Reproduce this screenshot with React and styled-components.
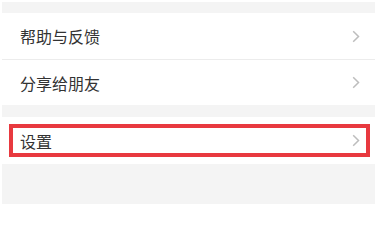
import React from "react";
import styled, { createGlobalStyle } from "styled-components";

const Global = createGlobalStyle`
  html, body { margin: 0; padding: 0; background: #ffffff; }
  body { font-family: "Noto Sans CJK SC", "Noto Sans", sans-serif; }
`;

const Page = styled.div`
  padding: 2px 0 0 2px;
  width: 379px;
  height: 204px;
  box-sizing: border-box;
  overflow: hidden;
`;

const Screen = styled.div`
  width: 373px;
  height: 202px;
  background: #f4f4f4;
  display: flex;
  flex-direction: column;
`;

const Gap = styled.div`
  height: ${(p) => p.$h}px;
  flex-shrink: 0;
`;

const Group = styled.div`
  background: #ffffff;
  display: flex;
  flex-direction: column;
`;

const Row = styled.div`
  position: relative;
  height: ${(p) => p.$h || 46}px;
  display: flex;
  align-items: center;
  justify-content: space-between;
  padding: 0 15px 0 18px;
  box-sizing: border-box;
  border-top: ${(p) => (p.$divider ? "1px solid #ececec" : "none")};
`;

const Label = styled.span`
  font-size: 16px;
  color: #333333;
  line-height: 1;
`;

const Highlight = styled.div`
  position: absolute;
  left: 7px;
  top: 7px;
  width: 361px;
  height: 33px;
  border: 4px solid #e8393f;
  box-sizing: border-box;
  pointer-events: none;
`;

const Chevron = () => (
  <svg width="8" height="13" viewBox="0 0 8 13" fill="none">
    <polyline points="1.2,1.2 6.5,6.5 1.2,11.8" stroke="#bdbdbd" strokeWidth="1.5" />
  </svg>
);

export default function App() {
  return (
    <>
      <Global />
      <Page>
        <Screen>
          <Gap $h={11} />
          <Group>
            <Row>
              <Label>帮助与反馈</Label>
              <Chevron />
            </Row>
            <Row $divider>
              <Label>分享给朋友</Label>
              <Chevron />
            </Row>
          </Group>
          <Gap $h={12} />
          <Group>
            <Row $h={47}>
              <Label>设置</Label>
              <Chevron />
              <Highlight />
            </Row>
          </Group>
        </Screen>
      </Page>
    </>
  );
}
